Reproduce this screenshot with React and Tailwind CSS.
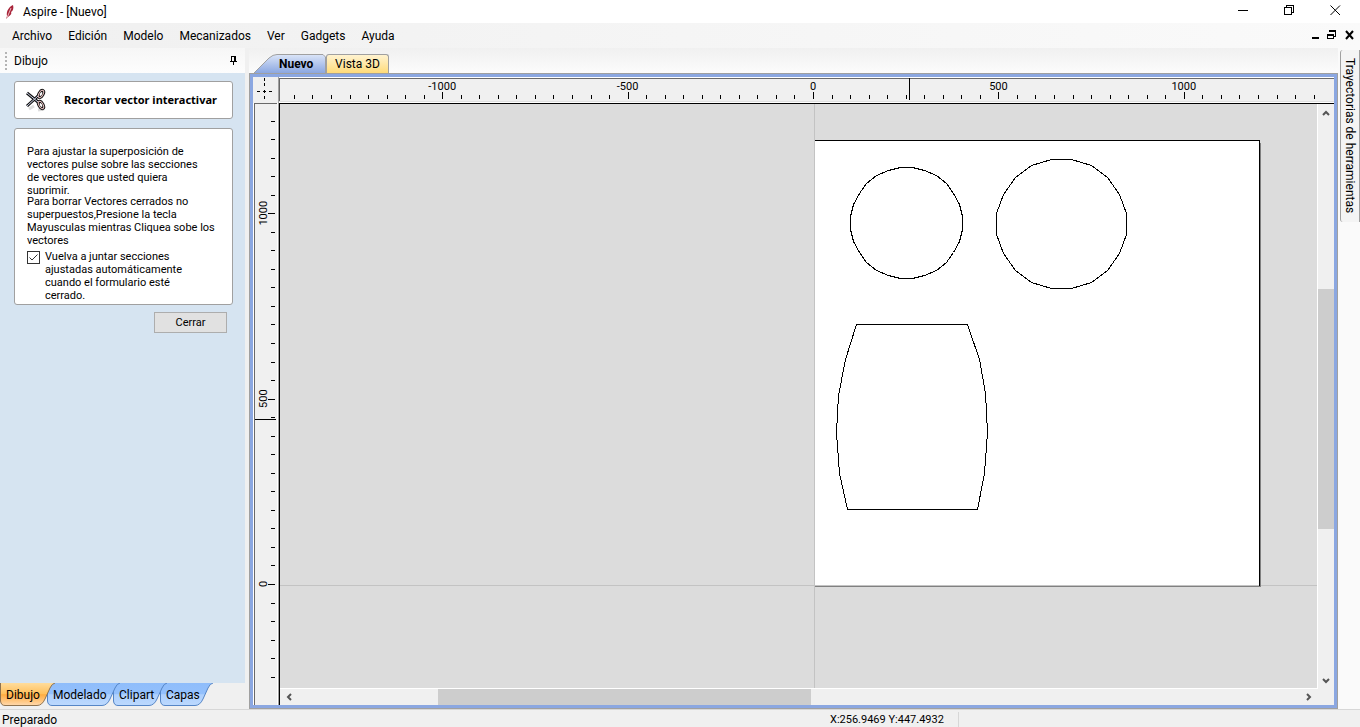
import React, { useState } from "react";

const menus = ["Archivo", "Edición", "Modelo", "Mecanizados", "Ver", "Gadgets", "Ayuda"];

const bottomTabs = [
  { name: "Dibujo", width: 55, box: "w-[55px] pl-1.5 z-40" },
  { name: "Modelado", width: 73, box: "w-[73px] pl-1.5 -ml-2 z-30" },
  { name: "Clipart", width: 54, box: "w-[54px] pl-1.5 -ml-[7px] z-20" },
  { name: "Capas", width: 53, box: "w-[53px] pl-1.5 -ml-[7px] z-10" },
];

// pixels per 50 drawing units
const STEP = 18.54;

// circles are drawn as line segments, like the rest of the vectors
function circlePoints(cx, cy, r, sides) {
  const points = [];
  for (let i = 0; i < sides; i++) {
    const a = ((i + 0.5) * 2 * Math.PI) / sides;
    points.push(`${Math.round(cx + r * Math.cos(a))},${Math.round(cy + r * Math.sin(a))}`);
  }
  return points.join(" ");
}

const smallCircle = circlePoints(92, -362.4, 56, 28);
const bigCircle = circlePoints(247, -361.5, 65.6, 20);
const barrel =
  "42,-261 153,-261 165,-226 171,-192 173,-153 170,-112 163,-76 33,-76 25,-112 22,-153 24,-190 31,-226";

function Feather() {
  return (
    <svg width="10" height="16" viewBox="0 0 10 16" aria-hidden="true">
      <path d="M8 1C4 3 1 7 2 12L1 15L3 13C6 11 7 9 6 8C8 7 9 4 8 1Z" fill="#a8243a" />
      <path d="M6 4L2 14" stroke="#e9b8be" strokeWidth="1" />
    </svg>
  );
}

function Scissors() {
  return (
    <svg width="24" height="24" viewBox="0 0 24 24" fill="none" aria-hidden="true">
      <path d="M4 21L9 18M13 22L19 21" stroke="#ddd" strokeWidth="3" />
      <g stroke="#111" strokeWidth="3">
        <path d="M2 5L13 14M2 18L13 8" />
        <ellipse cx="16" cy="6" rx="2" ry="4" transform="rotate(30 16 6)" />
        <ellipse cx="16" cy="17" rx="2" ry="4" transform="rotate(-30 16 17)" />
      </g>
      <g strokeWidth="1">
        <path d="M2 5L13 14M2 18L13 8" stroke="#cdd3ea" />
        <ellipse cx="16" cy="6" rx="2" ry="4" transform="rotate(30 16 6)" stroke="#f0c8c8" />
        <ellipse cx="16" cy="17" rx="2" ry="4" transform="rotate(-30 16 17)" stroke="#f0c8c8" />
      </g>
      <ellipse cx="16" cy="6" rx="1" ry="2" transform="rotate(30 16 6)" fill="#fff" />
      <ellipse cx="16" cy="17" rx="1" ry="2" transform="rotate(-30 16 17)" fill="#fff" />
    </svg>
  );
}

function WindowButtons() {
  return (
    <div className="flex items-center gap-[35px] pr-[19px] pb-0.5">
      <button aria-label="Minimizar" className="block">
        <svg width="11" height="11" shapeRendering="crispEdges">
          <path d="M0 5.5H10" stroke="#000" />
        </svg>
      </button>
      <button aria-label="Restaurar" className="block">
        <svg width="11" height="11" fill="none" stroke="#000" shapeRendering="crispEdges">
          <rect x="0.5" y="2.5" width="7" height="7" />
          <path d="M2.5 2V0.5H9.5V7.5H8" />
        </svg>
      </button>
      <button aria-label="Cerrar ventana" className="block">
        <svg width="11" height="11" stroke="#000">
          <path d="M0.5 0.5L10 10M10 0.5L0.5 10" />
        </svg>
      </button>
    </div>
  );
}

function DocButtons() {
  return (
    <div className="flex items-center gap-2 pr-1.5 pb-0.5">
      <button aria-label="Minimizar documento" className="block">
        <svg width="7" height="10" shapeRendering="crispEdges">
          <path d="M0 8H7" stroke="#000" strokeWidth="2" />
        </svg>
      </button>
      <button aria-label="Restaurar documento" className="block">
        <svg width="10" height="10" fill="none" stroke="#000" shapeRendering="crispEdges">
          <path d="M0.5 4V8.5H6.5V4M3 2V1M8.5 1V6.5H7" />
          <path d="M0 4.5H7M2 1H9" strokeWidth="2" />
        </svg>
      </button>
      <button aria-label="Cerrar documento" className="block">
        <svg width="9" height="10" stroke="#000" strokeWidth="2">
          <path d="M1 1L8 9M8 1L1 9" />
        </svg>
      </button>
    </div>
  );
}

function TextLines({ lines }) {
  return lines.map((line) => (
    <span key={line} className="block whitespace-nowrap">
      {line}
    </span>
  ));
}

function BottomTab({ tab, active, onClick }) {
  const w = tab.width;
  const shape = `M0.5 0V18Q1 22.5 5 22.5H${w - 18}Q${w - 13} 22.5 ${w - 10} 16L${w - 5} 5Q${w - 3} 0.5 ${w} 0`;
  return (
    <button onClick={onClick} className={"relative flex h-[23px] items-center text-left " + tab.box}>
      <svg className="absolute inset-0" width={w} height="23" aria-hidden="true">
        <defs>
          <linearGradient id={"tab-" + tab.name} x2="0" y2="1">
            <stop offset="0" stopColor={active ? "#ffdc9c" : "#8fbdfb"} />
            <stop offset="0.48" stopColor={active ? "#ffc05c" : "#93c0fc"} />
            <stop offset="0.52" stopColor={active ? "#ffad42" : "#aed0fd"} />
            <stop offset="1" stopColor={active ? "#ffd9ae" : "#bcd9fe"} />
          </linearGradient>
        </defs>
        <path d={shape} fill={`url(#tab-${tab.name})`} stroke={active ? "#8f7350" : "#5585c6"} />
      </svg>
      <span className="relative">{tab.name}</span>
    </button>
  );
}

function SidePanel({ onClose }) {
  const [join, setJoin] = useState(true);
  const [tab, setTab] = useState("Dibujo");

  return (
    <aside className="flex w-[245px] shrink-0 flex-col">
      <div className="flex h-[25px] items-center justify-between bg-gradient-to-b from-[#f6f6f6] to-[#fdfdfd] pr-[7px] pl-[5px]">
        <div className="flex items-center gap-[7px]">
          <svg width="2" height="18" aria-hidden="true">
            <path d="M1 0V18" stroke="#b4b4b4" strokeWidth="2" strokeDasharray="2 2" />
          </svg>
          <h2>Dibujo</h2>
        </div>
        <button aria-label="Anclar panel">
          <svg width="8" height="10" fill="none" stroke="#000" shapeRendering="crispEdges">
            <path d="M1.5 5V0.5H5.5V5M0 5.5H7M3.5 6V9M4.5 1V5" />
          </svg>
        </button>
      </div>
      <div className="flex flex-1 flex-col bg-[#d6e4f1] pt-2 pr-3 pl-3.5">
        <div className="flex h-[38px] items-center rounded-[3px] border border-[#a0a0a0] bg-white pl-2.5">
          <Scissors />
          <h1 className="ml-[15px] font-[Noto_Sans,sans-serif] text-[11px] font-bold whitespace-nowrap">
            Recortar vector interactivar
          </h1>
        </div>
        <div className="mt-[9px] h-[177px] rounded-[3px] border border-[#a0a0a0] bg-white px-3 pt-4 text-[11px] leading-[13px]">
          <p className="h-[49px] overflow-hidden">
            <TextLines
              lines={[
                "Para ajustar la superposición de",
                "vectores pulse sobre las secciones",
                "de vectores que usted quiera",
                "suprimir.",
              ]}
            />
          </p>
          <p className="mt-px h-[50px] overflow-hidden">
            <TextLines
              lines={[
                "Para borrar Vectores cerrados no",
                "superpuestos,Presione la tecla",
                "Mayusculas mientras Cliquea sobe los",
                "vectores",
              ]}
            />
          </p>
          <label className="mt-[5px] flex gap-[5px]">
            <span className="mt-px grid h-[13px] w-[13px] shrink-0">
              <input
                type="checkbox"
                checked={join}
                onChange={(e) => setJoin(e.target.checked)}
                className="peer h-[13px] w-[13px] appearance-none border border-[#333] bg-white [grid-area:1/1]"
              />
              <svg
                className="pointer-events-none invisible [grid-area:1/1] peer-checked:visible"
                width="13"
                height="13"
                fill="none"
                stroke="#333"
              >
                <path d="M2.5 6.5L5 9L10.5 3.5" />
              </svg>
            </span>
            <span>
              <TextLines
                lines={["Vuelva a juntar secciones", "ajustadas automáticamente", "cuando el formulario esté", "cerrado."]}
              />
            </span>
          </label>
        </div>
        <button
          onClick={onClose}
          className="mt-[7px] mr-1.5 h-[21px] w-[73px] self-end border border-[#adadad] bg-[#e1e1e1] text-[11px] leading-[13px]"
        >
          Cerrar
        </button>
      </div>
      <nav className="flex h-[26px]">
        {bottomTabs.map((t) => (
          <BottomTab key={t.name} tab={t} active={t.name === tab} onClick={() => setTab(t.name)} />
        ))}
      </nav>
    </aside>
  );
}

function ViewTabs() {
  return (
    <div className="flex h-[25px] items-end bg-gradient-to-b from-[#f0f0f0] to-[#fcfcfc]">
      <button className="relative h-[19px] w-[77px] pl-[30px] text-left font-bold">
        <svg className="absolute inset-0" width="77" height="19" aria-hidden="true">
          <defs>
            <linearGradient id="view-active" x2="0" y2="1">
              <stop offset="0" stopColor="#dbe5f8" />
              <stop offset="1" stopColor="#8ba7e1" />
            </linearGradient>
          </defs>
          <path d="M5 19L20 4Q24 0.5 28 0.5H74L76.5 3V19" fill="url(#view-active)" stroke="#a0a0a0" />
        </svg>
        <span className="relative block leading-5">Nuevo</span>
      </button>
      <button className="h-[19px] w-[63px] rounded-t-[3px] border-x border-t border-[#a0a0a0] bg-gradient-to-b from-[#fff3d0] to-[#ffdb77] leading-[18px]">
        Vista 3D
      </button>
    </div>
  );
}

function HorizontalRuler() {
  const ticks = [];
  for (let i = -28; i <= 27; i++) ticks.push(i);
  return (
    <div className="h-[26px] min-w-0 flex-1 bg-white pt-px">
      <svg className="block h-6 w-full border-b border-[#e0e0e0] bg-[#f0f0f0]" shapeRendering="crispEdges">
        <path d="M0 0.5H2000M0.5 0V23" stroke="#696969" />
        {ticks.map((i) => {
          const x = Math.round(534 + i * STEP);
          return <rect key={i} x={x} y={i % 10 === 0 ? 14 : 17} width="1" height={i % 10 === 0 ? 7 : 4} />;
        })}
        {[-1000, -500, 0, 500, 1000].map((v) => (
          <text key={v} x={534 + (v / 50) * STEP} y="12" textAnchor="middle" className="text-[11px]">
            {v}
          </text>
        ))}
        <rect x="630" y="0" width="1" height="22" />
      </svg>
    </div>
  );
}

function VerticalRuler() {
  const ticks = [];
  for (let i = -25; i <= 5; i++) ticks.push(i);
  return (
    <div className="w-[26px] shrink-0 border-r border-[#a0a0a0] bg-white pr-px pl-px">
      <svg className="block h-full w-full border-t border-l border-[#696969] bg-[#f0f0f0]" shapeRendering="crispEdges">
        {ticks.map((i) => {
          const y = Math.round(480 + i * STEP);
          return <rect key={i} x={i % 10 === 0 ? 13 : 16} y={y} width={i % 10 === 0 ? 7 : 4} height="1" />;
        })}
        {[0, 500, 1000].map((v) => {
          const y = 480 - (v / 50) * STEP;
          return (
            <text key={v} x="12" y={y} transform={`rotate(-90 12 ${y})`} textAnchor="middle" className="text-[11px]">
              {v}
            </text>
          );
        })}
        <rect x="0" y="315" width="21" height="1" />
      </svg>
    </div>
  );
}

function Drawing() {
  return (
    <svg className="block h-full w-full" fill="none" shapeRendering="crispEdges">
      <g transform="translate(534.5 481.5)">
        <path d="M0 -482V1000M-535 0H2000" stroke="#c3c3c3" />
        <rect x="0.5" y="-444.5" width="445" height="444" fill="#fff" />
        <path d="M446 -443V1.5M0.5 1H446.5" stroke="#808080" />
        <path d="M0.5 -445H445V0" stroke="#000" />
        <g stroke="#000">
          <polygon points={smallCircle} />
          <polygon points={bigCircle} />
          <polygon points={barrel} />
        </g>
      </g>
    </svg>
  );
}

function Arrow({ d, label, className }) {
  return (
    <button aria-label={label} className={"flex shrink-0 items-center justify-center " + className}>
      <svg width="8" height="8" fill="none" stroke="#555" strokeWidth="2">
        <path d={d} />
      </svg>
    </button>
  );
}

function Workspace() {
  return (
    <main className="ml-1 flex min-w-0 flex-1 flex-col">
      <ViewTabs />
      <div className="flex min-h-0 flex-1 flex-col border border-[#a0a0a0] bg-[#8ba7e1] p-[3px]">
        <div className="flex">
          <div className="w-[26px] shrink-0 border-r border-[#a0a0a0] bg-[#f0f0f0]">
            <svg width="25" height="25" shapeRendering="crispEdges" stroke="#000" aria-hidden="true">
              <path d="M11.5 1V4M11.5 6V9M11.5 13V16M11.5 19V22M10 14.5H13M4 14.5H7M16 14.5H19" />
            </svg>
          </div>
          <HorizontalRuler />
        </div>
        <div className="flex min-h-0 flex-1">
          <VerticalRuler />
          <div className="flex min-w-0 flex-1 flex-col border-t border-l border-black bg-[#f0f0f0]">
            <div className="flex min-h-0 flex-1">
              <div className="min-w-0 flex-1 border-r border-b border-white bg-[#dcdcdc]">
                <Drawing />
              </div>
              <div className="flex w-4 flex-col">
                <Arrow d="M1 6L4 3L7 6" label="Subir" className="h-[17px]" />
                <div className="flex flex-1 flex-col">
                  <div className="grow-[168]" />
                  <div className="grow-[240] bg-[#cdcdcd]" />
                  <div className="grow-[143]" />
                </div>
                <Arrow d="M1 2L4 5L7 2" label="Bajar" className="h-[17px]" />
              </div>
            </div>
            <div className="mr-[17px] flex h-4">
              <Arrow d="M6 1L3 4L6 7" label="Izquierda" className="w-[17px]" />
              <div className="flex flex-1">
                <div className="grow-[141]" />
                <div className="grow-[373] bg-[#cdcdcd]" />
                <div className="grow-[489]" />
              </div>
              <Arrow d="M2 1L5 4L2 7" label="Derecha" className="w-[17px]" />
            </div>
          </div>
        </div>
      </div>
    </main>
  );
}

export default function App() {
  const [open, setOpen] = useState(true);

  return (
    <div className="flex h-screen flex-col overflow-hidden bg-[#f0f0f0] font-[Roboto,sans-serif] text-xs leading-4 text-black">
      <header>
        <div className="flex h-[23px] items-center justify-between bg-white">
          <div className="flex items-center gap-2 pl-[5px]">
            <Feather />
            <span>Aspire - [Nuevo]</span>
          </div>
          <WindowButtons />
        </div>
        <div className="flex h-[25px] items-center justify-between bg-gradient-to-r from-[#f0f0f0] to-[#fafafa]">
          <nav className="flex gap-4 pl-3">
            {menus.map((m) => (
              <button key={m}>{m}</button>
            ))}
          </nav>
          <DocButtons />
        </div>
      </header>
      <div className="flex min-h-0 flex-1">
        {open && <SidePanel onClose={() => setOpen(false)} />}
        <Workspace />
        <div className="flex w-[22px] shrink-0 flex-col items-end bg-[#fafafa] pt-0.5">
          <button className="flex h-[172px] w-5 items-center justify-center rounded-l-[3px] border-y border-l border-[#a0a0a0] bg-[#f4f4f4] text-xs whitespace-nowrap [writing-mode:vertical-rl]">
            Trayectorias de herramientas
          </button>
        </div>
      </div>
      <footer className="flex h-[18px] shrink-0 items-center border-t border-[#d7d7d7] pt-0.5 pl-0.5">
        <span className="flex-1">Preparado</span>
        <span className="flex h-full w-[129px] items-center border-r border-[#d7d7d7] text-[11px]">X:256.9469 Y:447.4932</span>
        <span className="w-[401px]" />
      </footer>
    </div>
  );
}
